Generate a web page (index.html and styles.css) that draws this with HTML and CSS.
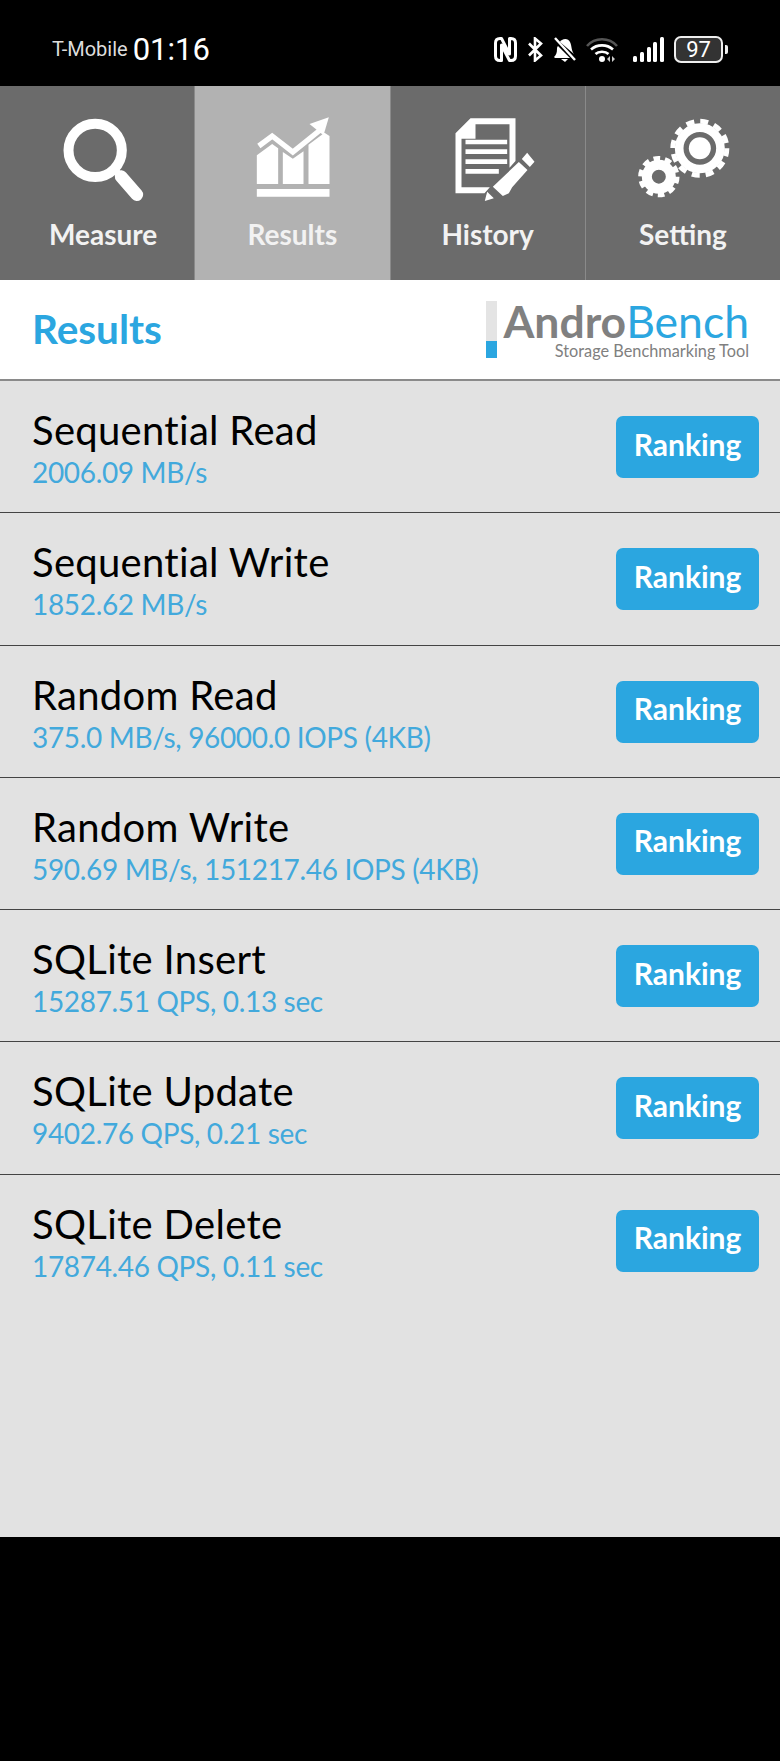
FILE: index.html
```html
<!DOCTYPE html>
<html lang="en">
<head>
    <meta charset="UTF-8">
    <meta name="viewport" content="width=device-width, initial-scale=1.0">
    <title>AndroBench Results</title>
    <link rel="stylesheet" href="styles.css">
</head>
<body>
    <div class="status-bar">
        <div class="status-left">
            <span class="carrier">T-Mobile</span>
            <span class="clock">01:16</span>
        </div>
        <div class="status-right">
            <svg class="st-nfc" width="23" height="25" viewBox="0 0 23 25"><path d="M7 1.500H6C3 1.500 1.500 3 1.500 6v13c0 3 1.500 4.500 4.500 4.500h1.500V8l8 15.500H17c3 0 4.500-1.500 4.500-4.500V6c0-3-1.500-4.500-4.500-4.500h-1.500V17L7.500 1.500z" fill="none" stroke="#fff" stroke-width="3" stroke-linejoin="round"/></svg>
            <svg class="st-bt" width="16" height="25" viewBox="0 0 16 25"><path d="M2 6.500l12 12-6 5V1.500l6 5-12 12" fill="none" stroke="#fff" stroke-width="2.600"/></svg>
            <svg class="st-bell" width="23" height="25" viewBox="0 0 23 25"><path d="M1 20c2-2 3-4 3-8 0-1 0-2 1-3l12 12H2zM7 5c1-3 8-5 10 0 2 4 1 8 4 12z" fill="#fff"/><path d="M8 22h7l-3 3z" fill="#fff"/><path d="M2 1l20 22" stroke="#fff" stroke-width="2.400"/></svg>
            <svg class="st-wifi" width="32" height="25" viewBox="0 0 32 25"><path d="M1 9c8-9 22-9 30 0" fill="none" stroke="#555" stroke-width="2.600"/><path d="M5 12.500c6-5.500 16-5.500 22 0M9.500 17c3-3 10-3 13 0" fill="none" stroke="#fff" stroke-width="2.600"/><circle cx="16" cy="22" r="3" fill="#fff"/><path d="M24 19v6l-3-3zM26 19v6l3-3z" fill="#ccc"/></svg>
            <svg class="st-signal" width="31" height="25" viewBox="0 0 31 25"><g fill="#fff"><rect x="0" y="19" width="4" height="6" rx="1.500"/><rect x="7" y="15" width="4" height="10" rx="1.500"/><rect x="14" y="10" width="4" height="15" rx="1.500"/><rect x="20" y="5" width="4" height="20" rx="1.500"/><rect x="27" y="0" width="4" height="25" rx="1.500"/></g></svg>
            <div class="battery"><span class="battery-level">97</span></div>
            <span class="battery-tip"></span>
        </div>
    </div>

    <nav class="tabs">
        <a class="tab tab-first">
            <svg class="tab-icon" viewBox="142.500 348 300 264"><circle cx="287" cy="451" r="80" fill="none" stroke="#fff" stroke-width="30"/><path d="M345 510l20 20" stroke="#fff" stroke-width="22"/><path d="M365 530l47 54" stroke="#fff" stroke-width="38" stroke-linecap="round"/></svg>
            <span>Measure</span>
        </a>
        <a class="tab tab-active">
            <svg class="tab-icon" viewBox="727.500 348 300 264"><g fill="#fff"><path d="M772 466l46-34 18 13v107h-64zM850 456l30 20 32-22v98h-62zM927 434l48-36 15 10v144h-63zM772 567h218v23H772z"/></g><path d="M778 438l40-30 62 48 82-66" fill="none" stroke="#fff" stroke-width="16"/><path d="M988 352l-58 20 42 34z" fill="#fff"/></svg>
            <span>Results</span>
        </a>
        <a class="tab">
            <svg class="tab-icon" viewBox="142.500 348 300 264"><path d="M240 355h135v128l-18 20V373H255v43h-42v146h85l-16 18H195V400z" fill="#fff"/><path d="M225 426h125M225 455h125M225 485h125M225 514h100" stroke="#fff" stroke-width="14"/><path d="M410 458l22 27-14 16-24-24zM385 486l26 24-46 52-10 18-18 8-30-28z" fill="#fff"/><path d="M290 575l20 20-27 8z" fill="#fff"/></svg>
            <span>History</span>
        </a>
        <a class="tab">
            <svg class="tab-icon" viewBox="727.500 348 300 264"><g fill="none" stroke="#fff"><circle cx="928" cy="445" r="62" stroke-width="26"/><circle cx="928" cy="445" r="81" stroke-width="15" stroke-dasharray="24 18.400"/><circle cx="928" cy="445" r="33" fill="#fff" stroke="none"/><circle cx="805" cy="530" r="36" stroke-width="30"/><circle cx="805" cy="530" r="55" stroke-width="14" stroke-dasharray="20 14.500"/></g></svg>
            <span>Setting</span>
        </a>
    </nav>

    <header class="page-head">
        <h1>Results</h1>
        <div class="logo">
            <div class="logo-bar"><span></span></div>
            <div class="logo-text">
                <div class="logo-name"><b>Andro</b>Bench</div>
                <div class="logo-sub">Storage Benchmarking Tool</div>
            </div>
        </div>
    </header>

    <main class="result-list">
        <div class="result-row">
            <div class="result-info"><div class="result-name">Sequential Read</div><div class="result-value">2006.09 MB/s</div></div>
            <button class="rank-btn">Ranking</button>
        </div>
        <div class="result-row">
            <div class="result-info"><div class="result-name">Sequential Write</div><div class="result-value">1852.62 MB/s</div></div>
            <button class="rank-btn">Ranking</button>
        </div>
        <div class="result-row">
            <div class="result-info"><div class="result-name">Random Read</div><div class="result-value">375.0 MB/s, 96000.0 IOPS (4KB)</div></div>
            <button class="rank-btn">Ranking</button>
        </div>
        <div class="result-row">
            <div class="result-info"><div class="result-name">Random Write</div><div class="result-value">590.69 MB/s, 151217.46 IOPS (4KB)</div></div>
            <button class="rank-btn">Ranking</button>
        </div>
        <div class="result-row">
            <div class="result-info"><div class="result-name">SQLite Insert</div><div class="result-value">15287.51 QPS, 0.13 sec</div></div>
            <button class="rank-btn">Ranking</button>
        </div>
        <div class="result-row">
            <div class="result-info"><div class="result-name">SQLite Update</div><div class="result-value">9402.76 QPS, 0.21 sec</div></div>
            <button class="rank-btn">Ranking</button>
        </div>
        <div class="result-row last">
            <div class="result-info"><div class="result-name">SQLite Delete</div><div class="result-value">17874.46 QPS, 0.11 sec</div></div>
            <button class="rank-btn">Ranking</button>
        </div>
    </main>
</body>
</html>
```

FILE: styles.css
```css
body {
    margin: 0;
    height: 1761px;
    background-color: #000;
    font-family: Lato, Arial, sans-serif;
    overflow: hidden;
}
.status-bar {
    height: 86px;
    display: flex;
    justify-content: space-between;
    align-items: center;
    padding: 12px 52px 0 52px;
    color: white;
    box-sizing: border-box;
}
.status-left {
    display: flex;
    align-items: center;
    gap: 5px;
}
.carrier {
    font-family: Roboto, sans-serif;
    font-size: 20px;
    color: #ddd;
}
.clock {
    font-family: Roboto, sans-serif;
    font-size: 31px;
}
.status-right {
    display: flex;
    align-items: center;
}
.st-bt, .st-bell, .st-wifi {
    margin-left: 10px;
}
.st-signal {
    margin-left: 15px;
}
.battery {
    width: 49px;
    height: 27px;
    margin-left: 10px;
    box-sizing: border-box;
    border: 2px solid #eee;
    border-radius: 7px;
    background-color: #333;
    display: flex;
    align-items: center;
    justify-content: center;
}
.battery-level {
    font-family: Roboto, sans-serif;
    font-size: 22px;
}
.battery-tip {
    width: 3px;
    height: 9px;
    margin-left: 2px;
    background-color: #eee;
    border-radius: 0 2px 2px 0;
}
.tabs {
    height: 194px;
    display: flex;
}
.tab {
    flex: 1;
    display: flex;
    flex-direction: column;
    align-items: center;
    padding-top: 30px;
    box-sizing: border-box;
    background-color: #6b6b6b;
    border-right: 1px solid #8a8a8a;
    color: #f2f2f2;
    font-size: 28px;
    font-weight: 700;
}
.tab:last-child {
    border-right: none;
}
.tab-icon {
    width: 100px;
    height: 88px;
    display: block;
}
.tab span {
    margin-top: 12px;
    line-height: 36px;
}
.tab-first span {
    margin-left: 12px;
}
.tab-active {
    background-color: #b2b2b2;
}
.page-head {
    height: 99px;
    background: white;
    display: flex;
    justify-content: space-between;
    align-items: center;
    padding: 3px 31px 0 32px;
    box-sizing: border-box;
}
.page-head h1 {
    margin: 0 0 5px;
    font-size: 40.5px;
    font-weight: 700;
    color: #2ba6e0;
}
.logo {
    display: flex;
    gap: 6px;
}
.logo-bar {
    width: 11px;
    height: 57px;
    background-color: #e4e4e4;
    display: flex;
    align-items: flex-end;
}
.logo-bar span {
    display: block;
    width: 100%;
    height: 17px;
    background-color: #2ba6e0;
}
.logo-text {
    text-align: right;
}
.logo-name {
    font-size: 44.5px;
    line-height: 40px;
    color: #2ba6e0;
}
.logo-name b {
    color: #808080;
    font-weight: 700;
}
.logo-sub {
    font-size: 16.3px;
    line-height: 20px;
    color: #808080;
}
.result-list {
    height: 1158px;
    background-color: #e2e2e2;
    border-top: 2px solid #8a8a8a;
    box-sizing: border-box;
}
.result-row {
    height: 132.3px;
    display: flex;
    justify-content: space-between;
    align-items: flex-start;
    padding: 0 21px 0 32px;
    box-sizing: border-box;
    border-bottom: 1px solid #444;
}
.result-row.last {
    border-bottom: none;
}
.result-info {
    padding-top: 24px;
}
.result-name {
    font-size: 40px;
    line-height: 50px;
    letter-spacing: 0.3px;
    color: #000;
}
.result-value {
    font-size: 28px;
    line-height: 35px;
    letter-spacing: -0.33px;
    color: #42a9dc;
}
.rank-btn {
    margin-top: 35px;
    width: 143px;
    height: 62px;
    padding: 0 0 7px;
    background-color: #2ba6e0;
    color: white;
    border: none;
    border-radius: 7px;
    font-family: inherit;
    font-size: 30px;
    font-weight: 700;
}
```
